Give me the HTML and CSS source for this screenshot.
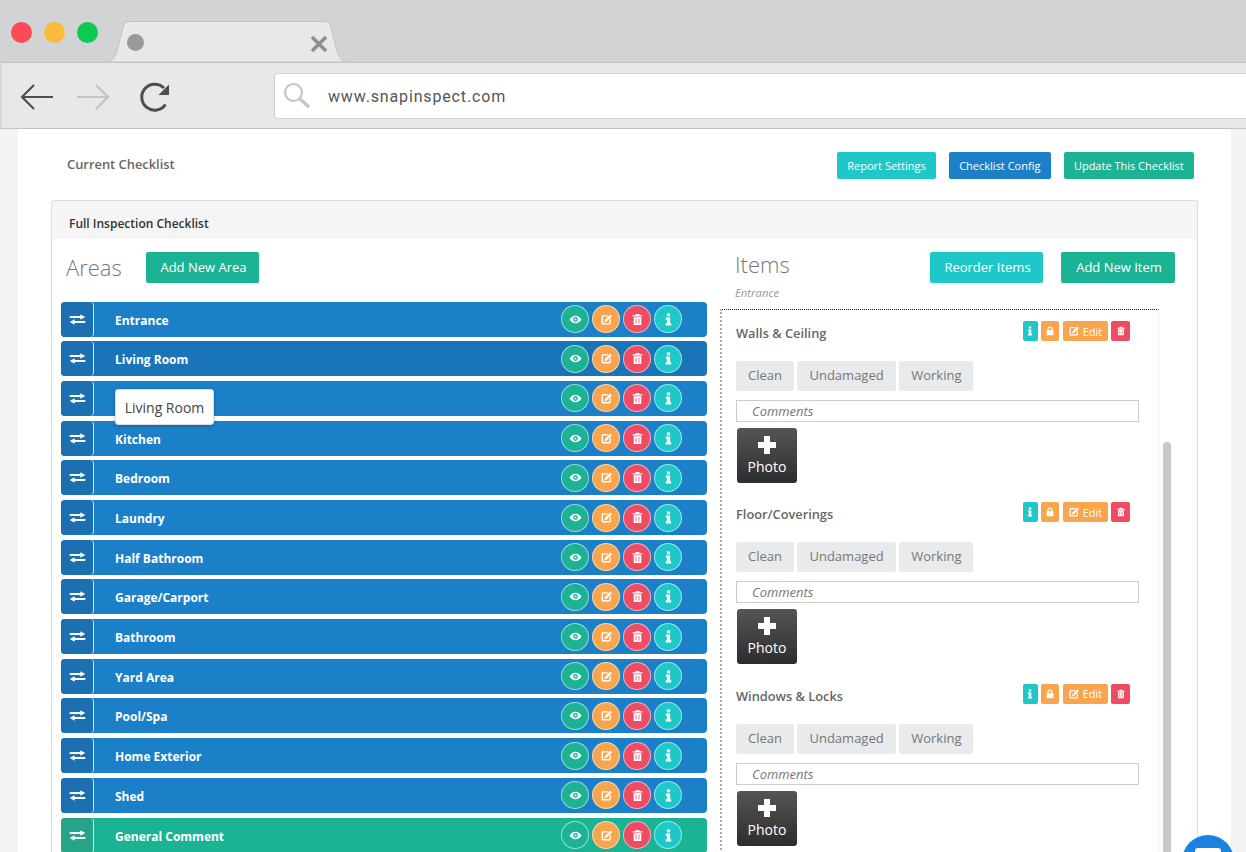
FILE: index.html
```html
<!DOCTYPE html>
<html lang="en">

<head>
  <meta charset="UTF-8" />
  <title>SnapInspect Checklist</title>
  <link rel="stylesheet" href="styles.css">
</head>

<body>
  <svg class="sprite">
    <symbol id="i-swap" viewBox="0 0 24 24"><path d="M1 7h15V4.500l7 4-7 4V10H1zM23 14H8v-2.500l-7 4 7 4V17h15z"/></symbol>
    <symbol id="i-eye" viewBox="0 0 24 24"><path fill-rule="evenodd" d="M12 5C7 5 3 8.500 1 12c2 3.500 6 7 11 7s9-3.500 11-7c-2-3.500-6-7-11-7zm0 11.500a4.500 4.500 0 1 1 0-9 4.500 4.500 0 0 1 0 9zM12 10a2 2 0 1 0 0 4 2 2 0 0 0 0-4z"/></symbol>
    <symbol id="i-edit" viewBox="0 0 24 24"><path fill-rule="evenodd" d="M5 4h11l-2.500 2.500H5.500v12h12v-6l2.500-2.500V19a2 2 0 0 1-2 2H5a2 2 0 0 1-2-2V6a2 2 0 0 1 2-2z"/><path d="M19 3l3 3-10 10-4 1 1-4z"/></symbol>
    <symbol id="i-trash" viewBox="0 0 24 24"><path fill-rule="evenodd" d="M9 2h6l1 2h5v2.500H3V4h5zM5 8h14v14H5zM8.500 10.500v9h1.500v-9zm5.500 0v9h1.500v-9z"/></symbol>
    <symbol id="i-info" viewBox="0 0 24 24"><path d="M9 1h6v5H9zM7 8.500h8V19h2v4H7v-4h2v-6.500H7z"/></symbol>
    <symbol id="i-lock" viewBox="0 0 24 24"><path fill-rule="evenodd" d="M6 10V7a6 6 0 0 1 12 0v3h2v12H4V10zm3 0h6V7a3 3 0 0 0-6 0z"/></symbol>
  </svg>

  <header class="browser">
    <div class="tabbar">
      <div class="lights">
        <span class="light red"></span>
        <span class="light amber"></span>
        <span class="light green"></span>
      </div>
      <div class="tab">
        <svg class="tab-shape" width="240" height="41" viewBox="0 0 240 41">
          <path d="M0 41C6 40 8 36 10 30L16 6C17 2 19 0.500 23 0.500H217C221 0.500 223 2 224 6L230 30C232 36 234 40 240 41Z" fill="#e8e8e8" stroke="#c2c3c5"/>
        </svg>
        <span class="tab-dot"></span>
        <svg class="tab-close" width="18" height="18" viewBox="0 0 18 18">
          <path d="M2 2l14 14M16 2L2 16" stroke="#8e8e8e" stroke-width="3.500"/>
        </svg>
      </div>
    </div>
    <div class="toolbar">
      <svg class="nav" width="34" height="28" viewBox="0 0 34 28" fill="none" stroke="#505050" stroke-width="2.200">
        <path d="M33 14H2M14 2L2 14l12 12"/>
      </svg>
      <svg class="nav" width="34" height="28" viewBox="0 0 34 28" fill="none" stroke="#c4c4c4" stroke-width="2.200">
        <path d="M1 14h31M20 2l12 12-12 12"/>
      </svg>
      <svg class="nav reload" width="32" height="32" viewBox="0 0 32 32" fill="none" stroke="#4d4d4d" stroke-width="3">
        <path d="M26.500 23.500A13 13 0 1 1 25 7"/>
        <path d="M30 3.500V14H19.500z" fill="#4d4d4d" stroke="none"/>
      </svg>
      <div class="urlbar">
        <svg width="28" height="28" viewBox="0 0 28 28" fill="none" stroke="#c6c6c6">
          <circle cx="10.500" cy="10.500" r="8.500" stroke-width="2.200"/>
          <path d="M17 17l9 8" stroke-width="3.500"/>
        </svg>
        <span class="url">www.snapinspect.com</span>
      </div>
    </div>
  </header>

  <main class="page">
    <div class="topline">
      <span class="topline-title">Current Checklist</span>
      <div class="topline-btns">
        <a class="btn small teal">Report Settings</a>
        <a class="btn small blue">Checklist Config</a>
        <a class="btn small green">Update This Checklist</a>
      </div>
    </div>

    <section class="panel">
      <div class="panel-head">Full Inspection Checklist</div>
      <div class="panel-body">
        <div class="areas">
          <div class="areas-head">
            <h2>Areas</h2>
            <a class="btn green add-area">Add New Area</a>
          </div>
          <div class="rows">
            <div class="row"><span class="grip"><svg><use href="#i-swap"/></svg></span><span class="row-name">Entrance</span><div class="row-tools"><span class="dot green"><svg><use href="#i-eye"/></svg></span><span class="dot orange"><svg><use href="#i-edit"/></svg></span><span class="dot red"><svg><use href="#i-trash"/></svg></span><span class="dot teal"><svg><use href="#i-info"/></svg></span></div></div>
            <div class="row hover"><span class="grip"><svg><use href="#i-swap"/></svg></span><span class="row-name">Living Room</span><div class="row-tools"><span class="dot green"><svg><use href="#i-eye"/></svg></span><span class="dot orange"><svg><use href="#i-edit"/></svg></span><span class="dot red"><svg><use href="#i-trash"/></svg></span><span class="dot teal"><svg><use href="#i-info"/></svg></span></div></div>
            <div class="row"><span class="grip"><svg><use href="#i-swap"/></svg></span><span class="row-name"></span><div class="row-tools"><span class="dot green"><svg><use href="#i-eye"/></svg></span><span class="dot orange"><svg><use href="#i-edit"/></svg></span><span class="dot red"><svg><use href="#i-trash"/></svg></span><span class="dot teal"><svg><use href="#i-info"/></svg></span></div></div>
            <div class="row"><span class="grip"><svg><use href="#i-swap"/></svg></span><span class="row-name">Kitchen</span><div class="row-tools"><span class="dot green"><svg><use href="#i-eye"/></svg></span><span class="dot orange"><svg><use href="#i-edit"/></svg></span><span class="dot red"><svg><use href="#i-trash"/></svg></span><span class="dot teal"><svg><use href="#i-info"/></svg></span></div></div>
            <div class="row"><span class="grip"><svg><use href="#i-swap"/></svg></span><span class="row-name">Bedroom</span><div class="row-tools"><span class="dot green"><svg><use href="#i-eye"/></svg></span><span class="dot orange"><svg><use href="#i-edit"/></svg></span><span class="dot red"><svg><use href="#i-trash"/></svg></span><span class="dot teal"><svg><use href="#i-info"/></svg></span></div></div>
            <div class="row"><span class="grip"><svg><use href="#i-swap"/></svg></span><span class="row-name">Laundry</span><div class="row-tools"><span class="dot green"><svg><use href="#i-eye"/></svg></span><span class="dot orange"><svg><use href="#i-edit"/></svg></span><span class="dot red"><svg><use href="#i-trash"/></svg></span><span class="dot teal"><svg><use href="#i-info"/></svg></span></div></div>
            <div class="row"><span class="grip"><svg><use href="#i-swap"/></svg></span><span class="row-name">Half Bathroom</span><div class="row-tools"><span class="dot green"><svg><use href="#i-eye"/></svg></span><span class="dot orange"><svg><use href="#i-edit"/></svg></span><span class="dot red"><svg><use href="#i-trash"/></svg></span><span class="dot teal"><svg><use href="#i-info"/></svg></span></div></div>
            <div class="row"><span class="grip"><svg><use href="#i-swap"/></svg></span><span class="row-name">Garage/Carport</span><div class="row-tools"><span class="dot green"><svg><use href="#i-eye"/></svg></span><span class="dot orange"><svg><use href="#i-edit"/></svg></span><span class="dot red"><svg><use href="#i-trash"/></svg></span><span class="dot teal"><svg><use href="#i-info"/></svg></span></div></div>
            <div class="row"><span class="grip"><svg><use href="#i-swap"/></svg></span><span class="row-name">Bathroom</span><div class="row-tools"><span class="dot green"><svg><use href="#i-eye"/></svg></span><span class="dot orange"><svg><use href="#i-edit"/></svg></span><span class="dot red"><svg><use href="#i-trash"/></svg></span><span class="dot teal"><svg><use href="#i-info"/></svg></span></div></div>
            <div class="row"><span class="grip"><svg><use href="#i-swap"/></svg></span><span class="row-name">Yard Area</span><div class="row-tools"><span class="dot green"><svg><use href="#i-eye"/></svg></span><span class="dot orange"><svg><use href="#i-edit"/></svg></span><span class="dot red"><svg><use href="#i-trash"/></svg></span><span class="dot teal"><svg><use href="#i-info"/></svg></span></div></div>
            <div class="row"><span class="grip"><svg><use href="#i-swap"/></svg></span><span class="row-name">Pool/Spa</span><div class="row-tools"><span class="dot green"><svg><use href="#i-eye"/></svg></span><span class="dot orange"><svg><use href="#i-edit"/></svg></span><span class="dot red"><svg><use href="#i-trash"/></svg></span><span class="dot teal"><svg><use href="#i-info"/></svg></span></div></div>
            <div class="row"><span class="grip"><svg><use href="#i-swap"/></svg></span><span class="row-name">Home Exterior</span><div class="row-tools"><span class="dot green"><svg><use href="#i-eye"/></svg></span><span class="dot orange"><svg><use href="#i-edit"/></svg></span><span class="dot red"><svg><use href="#i-trash"/></svg></span><span class="dot teal"><svg><use href="#i-info"/></svg></span></div></div>
            <div class="row"><span class="grip"><svg><use href="#i-swap"/></svg></span><span class="row-name">Shed</span><div class="row-tools"><span class="dot green"><svg><use href="#i-eye"/></svg></span><span class="dot orange"><svg><use href="#i-edit"/></svg></span><span class="dot red"><svg><use href="#i-trash"/></svg></span><span class="dot teal"><svg><use href="#i-info"/></svg></span></div></div>
            <div class="row comment"><span class="grip"><svg><use href="#i-swap"/></svg></span><span class="row-name">General Comment</span><div class="row-tools"><span class="dot green"><svg><use href="#i-eye"/></svg></span><span class="dot orange"><svg><use href="#i-edit"/></svg></span><span class="dot red"><svg><use href="#i-trash"/></svg></span><span class="dot teal"><svg><use href="#i-info"/></svg></span></div></div>
            <div class="tooltip">Living Room</div>
          </div>
        </div>

        <div class="items">
          <div class="items-head">
            <div>
              <h2>Items</h2>
              <em class="items-sub">Entrance</em>
            </div>
            <div class="items-btns">
              <a class="btn teal reorder">Reorder Items</a>
              <a class="btn green add-item">Add New Item</a>
            </div>
          </div>
          <div class="items-wrap">
            <div class="items-list">
              <article class="item">
                <div class="item-top">
                  <h3>Walls &amp; Ceiling</h3>
                  <div class="item-tools">
                    <span class="tool teal info"><svg><use href="#i-info"/></svg></span>
                    <span class="tool orange lock"><svg><use href="#i-lock"/></svg></span>
                    <span class="tool orange edit"><svg><use href="#i-edit"/></svg>Edit</span>
                    <span class="tool red trash"><svg><use href="#i-trash"/></svg></span>
                  </div>
                </div>
                <div class="chips"><span class="chip">Clean</span><span class="chip">Undamaged</span><span class="chip">Working</span></div>
                <div class="comments">Comments</div>
                <div class="photo"><svg width="20" height="20" viewBox="0 0 20 20"><path d="M7 1h6v6h6v6h-6v6H7v-6H1V7h6z" fill="#fff"/></svg><span>Photo</span></div>
              </article>
              <article class="item">
                <div class="item-top">
                  <h3>Floor/Coverings</h3>
                  <div class="item-tools">
                    <span class="tool teal info"><svg><use href="#i-info"/></svg></span>
                    <span class="tool orange lock"><svg><use href="#i-lock"/></svg></span>
                    <span class="tool orange edit"><svg><use href="#i-edit"/></svg>Edit</span>
                    <span class="tool red trash"><svg><use href="#i-trash"/></svg></span>
                  </div>
                </div>
                <div class="chips"><span class="chip">Clean</span><span class="chip">Undamaged</span><span class="chip">Working</span></div>
                <div class="comments">Comments</div>
                <div class="photo"><svg width="20" height="20" viewBox="0 0 20 20"><path d="M7 1h6v6h6v6h-6v6H7v-6H1V7h6z" fill="#fff"/></svg><span>Photo</span></div>
              </article>
              <article class="item">
                <div class="item-top">
                  <h3>Windows &amp; Locks</h3>
                  <div class="item-tools">
                    <span class="tool teal info"><svg><use href="#i-info"/></svg></span>
                    <span class="tool orange lock"><svg><use href="#i-lock"/></svg></span>
                    <span class="tool orange edit"><svg><use href="#i-edit"/></svg>Edit</span>
                    <span class="tool red trash"><svg><use href="#i-trash"/></svg></span>
                  </div>
                </div>
                <div class="chips"><span class="chip">Clean</span><span class="chip">Undamaged</span><span class="chip">Working</span></div>
                <div class="comments">Comments</div>
                <div class="photo"><svg width="20" height="20" viewBox="0 0 20 20"><path d="M7 1h6v6h6v6h-6v6H7v-6H1V7h6z" fill="#fff"/></svg><span>Photo</span></div>
              </article>
            </div>
            <div class="scrolltrack"><div class="scrollthumb"></div></div>
          </div>
        </div>
      </div>
    </section>
  </main>

  <div class="fab"><span class="fab-icon"></span></div>
</body>

</html>
```

FILE: styles.css
```css
* {
  box-sizing: border-box;
}

html,
body {
  margin: 0;
  height: 852px;
  overflow: hidden;
}

body {
  position: relative;
  font-family: 'Open Sans', sans-serif;
  background: #f3f3f6;
  color: #666;
}

.sprite {
  display: none;
}

h2,
h3 {
  margin: 0;
}

/* browser frame */
.browser {
  height: 129px;
}

.tabbar {
  display: flex;
  height: 63px;
  background: #d2d3d5;
  border-bottom: 1px solid #c2c3c5;
}

.lights {
  display: flex;
  gap: 12px;
  padding: 22px 0 0 11px;
}

.light {
  width: 21px;
  height: 21px;
  border-radius: 50%;
}

.light.red {
  background: #fc4a56;
}

.light.amber {
  background: #fdbb3d;
}

.light.green {
  background: #0ccb50;
}

.tab {
  position: relative;
  width: 240px;
  height: 41px;
  margin: 21px 0 0 9px;
}

.tab-shape {
  display: block;
}

.tab-dot {
  position: absolute;
  left: 20px;
  top: 13px;
  width: 17px;
  height: 17px;
  border-radius: 50%;
  background: #999;
}

.tab-close {
  position: absolute;
  left: 203px;
  top: 14px;
}

.toolbar {
  display: flex;
  align-items: center;
  height: 66px;
  padding: 0 0 0 18px;
  background: #e8e8e8;
  border-bottom: 1px solid #c2c3c5;
  border-left: 2px solid #d8d8d8;
}

.nav {
  flex: none;
  margin-right: 22px;
  margin-top: 3px;
}

.nav.reload {
  margin: 3px 0 0 7px;
}

.urlbar {
  display: flex;
  align-items: center;
  gap: 17px;
  width: 1000px;
  height: 46px;
  margin-left: 103px;
  padding-left: 8px;
  background: #fff;
  border: 1px solid #d4d4d4;
  border-radius: 4px;
  flex: none;
}

.url {
  padding-top: 2px;
  font-family: Roboto, sans-serif;
  font-size: 16px;
  letter-spacing: 0.85px;
  color: #555;
}

/* page */
.page {
  height: 723px;
  margin: 0 15px 0 18px;
  padding-top: 23px;
  background: #fff;
  overflow: hidden;
}

.topline {
  display: flex;
  align-items: center;
  justify-content: space-between;
  height: 27px;
  padding: 0 37px 0 49px;
}

.topline-title {
  margin-top: -3px;
  font-size: 12.900px;
  font-weight: 600;
  color: #666;
}

.topline-btns {
  display: flex;
  gap: 13px;
}

.btn {
  display: flex;
  align-items: center;
  justify-content: center;
  height: 31px;
  padding-bottom: 2px;
  border-radius: 2px;
  color: #fff;
  font-size: 13px;
}

.btn.small {
  height: 27px;
  padding: 0 10.250px 1px;
  font-size: 11px;
}

.btn.teal {
  background: #1fc8c8;
}

.btn.blue {
  background: #1b80c8;
}

.btn.green {
  background: #1bb394;
}

.panel {
  width: 1147px;
  margin: 21px 0 0 33px;
  border: 1px solid #ddd;
  border-bottom: 0;
  border-radius: 3px 3px 0 0;
}

.panel-head {
  height: 38px;
  padding: 0 17px;
  line-height: 46px;
  background: #f5f5f5;
  font-size: 12px;
  font-weight: 600;
  color: #333;
}

.panel-body {
  display: flex;
  padding: 13px 0 0 9px;
}

/* areas */
.areas {
  width: 646px;
  flex: none;
}

.areas-head {
  display: flex;
  align-items: center;
  height: 31px;
  margin-bottom: 18.600px;
}

.areas-head h2,
.items-head h2 {
  font-size: 22px;
  font-weight: 300;
  line-height: 30px;
  color: #777;
}

.areas-head h2 {
  width: 85px;
  padding-left: 5px;
  margin-top: -2px;
}

.add-area {
  width: 113px;
  padding-left: 2px;
}

.rows {
  position: relative;
  display: flex;
  flex-direction: column;
  gap: 4.700px;
}

.row {
  display: flex;
  align-items: center;
  flex: none;
  height: 35px;
  background: #1b80c8;
  border-radius: 4px;
  color: #fff;
}

.row.hover {
  background: #1a75b8;
}

.row.comment {
  background: #1bb394;
}

.grip {
  display: flex;
  align-items: center;
  justify-content: center;
  width: 33px;
  height: 100%;
  background: #1c6fb0;
  border-right: 1px solid #d5e6f3;
  border-radius: 4px;
}

.row.comment .grip {
  background: #25a48a;
  border-right-color: #cfeee8;
}

.grip svg {
  width: 17px;
  height: 17px;
  fill: #fff;
}

.row-name {
  flex: 1;
  padding: 2px 0 0 21px;
  font-size: 12px;
  font-weight: 700;
}

.row-tools {
  display: flex;
  gap: 3px;
  padding-right: 25px;
}

.dot {
  display: flex;
  align-items: center;
  justify-content: center;
  width: 28px;
  height: 28px;
  border: 1.500px solid rgba(255, 255, 255, 0.55);
  border-radius: 50%;
}

.dot svg {
  width: 13px;
  height: 13px;
  fill: #fff;
}

.dot.green {
  background: #1bb394;
}

.dot.orange {
  background: #f8a54e;
}

.dot.red {
  background: #ee4c63;
}

.dot.teal {
  background: #1fc8c8;
}

.tooltip {
  position: absolute;
  left: 54px;
  top: 87px;
  width: 99px;
  height: 36px;
  background: #fff;
  border: 1px solid #ddd;
  border-radius: 3px;
  box-shadow: 0 1px 4px rgba(0, 0, 0, 0.25);
  text-align: center;
  line-height: 36px;
  font-size: 14px;
  color: #444;
}

/* items */
.items {
  width: 455px;
  margin-left: 13px;
  flex: none;
}

.items-head {
  display: flex;
  justify-content: space-between;
  height: 57px;
  padding-left: 15px;
}

.items-head h2 {
  margin-top: -3px;
}

.items-sub {
  display: block;
  margin-top: 6px;
  font-size: 11.300px;
  color: #999;
}

.items-btns {
  display: flex;
  gap: 18px;
}

.reorder {
  width: 113px;
  padding-left: 2px;
}

.add-item {
  width: 114px;
  padding-left: 2px;
}

.items-wrap {
  display: flex;
}

.items-list {
  width: 439px;
  padding: 11px 0 0 14px;
  border-top: 1px dotted #222;
  border-left: 2px dotted #aaa;
  border-right: 1px solid #f0f0f0;
}

.item {
  height: 181.300px;
}

.item-top {
  display: flex;
  justify-content: space-between;
  height: 20px;
  padding-right: 28px;
}

.item h3 {
  margin-top: 3px;
  font-size: 12.800px;
  font-weight: 600;
  color: #666;
}

.item-tools {
  display: flex;
  gap: 3.500px;
}

.tool {
  display: flex;
  align-items: center;
  justify-content: center;
  gap: 3px;
  height: 20px;
  border-radius: 2px;
  color: #fff;
  font-size: 11px;
}

.tool svg {
  width: 10px;
  height: 10px;
  fill: #fff;
}

.tool.edit svg {
  width: 12px;
  height: 12px;
}

.tool.teal {
  background: #1fc8c8;
}

.tool.orange {
  background: #f8a54e;
}

.tool.red {
  background: #ee4c63;
}

.tool.info {
  width: 15px;
}

.tool.lock {
  width: 18px;
}

.tool.edit {
  width: 45px;
}

.tool.trash {
  width: 19px;
}

.chips {
  display: flex;
  gap: 3.500px;
  margin-top: 20px;
}

.chip {
  height: 30px;
  padding: 0 12px;
  background: #e8eaec;
  border-radius: 2px;
  line-height: 29px;
  font-size: 13px;
  color: #777;
}

.comments {
  height: 22px;
  width: 403px;
  margin-top: 9px;
  padding-left: 15px;
  border: 1px solid #ccc;
  line-height: 21px;
  font-size: 13px;
  font-style: italic;
  color: #777;
}

.photo {
  display: flex;
  flex-direction: column;
  align-items: center;
  width: 60px;
  height: 55px;
  margin: 6px 0 0 1px;
  padding-top: 7px;
  border-radius: 3px;
  background: linear-gradient(#555, #2d2d2d);
  color: #fff;
  font-size: 14px;
  line-height: 20px;
}

.photo svg {
  flex: none;
}

.photo span {
  margin-top: 2px;
}

.scrolltrack {
  width: 15px;
  padding: 133px 0 0 4px;
}

.scrollthumb {
  width: 8px;
  height: 500px;
  background: #c8c8c8;
  border-radius: 4px 4px 0 0;
}

.fab {
  position: absolute;
  left: 1182px;
  top: 835px;
  width: 52px;
  height: 52px;
  border-radius: 50%;
  background: #1b82e0;
}

.fab-icon {
  position: absolute;
  left: 13px;
  top: 13px;
  width: 26px;
  height: 20px;
  border-radius: 3px;
  background: #fff;
}
```
